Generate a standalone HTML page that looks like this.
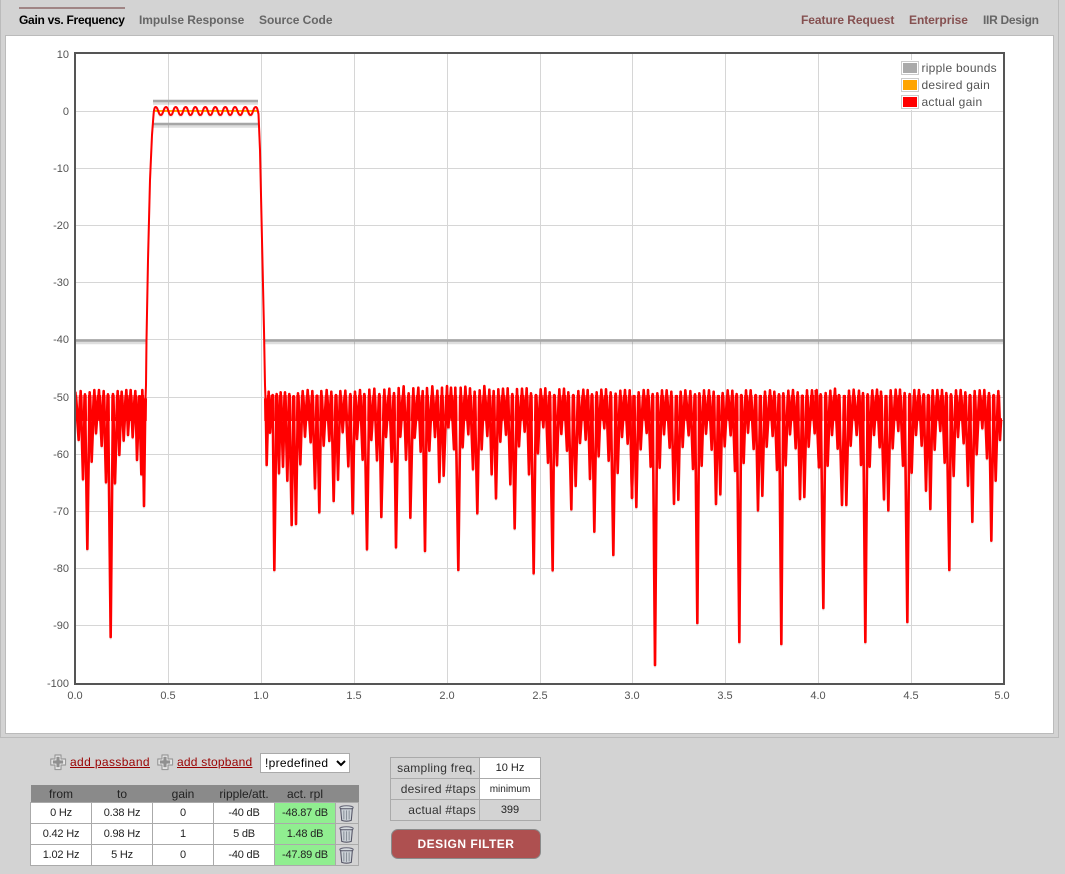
<!DOCTYPE html>
<html><head><meta charset="utf-8">
<style>
html,body{margin:0;padding:0;background:#d3d3d3;width:1065px;height:874px;overflow:hidden;font-family:"Liberation Sans",Arial,sans-serif;color:#333}
.abs{position:absolute}
#outer{left:0;top:0;width:1057px;height:737px;border:1px solid #bbb;border-top:0}
#panel{left:5px;top:35px;width:1047px;height:697px;background:#fff;border:1px solid #bbb}
.tab{position:absolute;top:13px;font-size:12px;font-weight:bold;line-height:14px;color:#666;white-space:nowrap;letter-spacing:-.05px}
#ul{left:19px;top:7px;width:106px;height:1.5px;background:#a08585}
svg text{font-family:"Liberation Sans",Arial,sans-serif}
a{color:#900;text-decoration:underline}
.lnk{position:absolute;top:755px;font-size:12px;line-height:15px;white-space:nowrap}
select{position:absolute;left:260px;top:753px;width:90px;height:20px;font:12px "Liberation Sans",Arial,sans-serif;letter-spacing:.3px;background:#fff;border:1px solid #aaa;padding:0;color:#000;border-radius:0}
table{border-collapse:collapse;table-layout:fixed;position:absolute}
#t1{left:30px;top:785px;width:328px}
#t1 th{background:#8a8a8a;font-weight:normal;font-size:12px;height:17px;padding:0;color:#222;text-align:center}
#t1 td{border:1px solid #aaa;background:#fff;font-size:11px;letter-spacing:-.2px;height:20px;padding:0;text-align:center;color:#222}
#t1 td.g{background:#90ee90}
#t1 td.x{background:#d3d3d3;line-height:0;text-align:left;padding-left:3px}
#t2{left:390px;top:757px;width:150px}
#t2 td{border:1px solid #aaa;height:20px;padding:0;font-size:12px;color:#333}
#t2 td.l{text-align:right;padding-right:3px;letter-spacing:.25px;background:#d3d3d3}
#t2 td.v{text-align:center;background:#fff;font-size:11px;color:#222}
#btn{left:391px;top:829px;width:148px;height:28px;background:#ae5050;border:1px solid #8a8a8a;border-radius:7px;color:#fff;font-weight:bold;font-size:12px;letter-spacing:.5px;line-height:28px;text-align:center}
</style></head><body>
<div class="abs" id="outer"></div>
<div class="abs" id="panel"></div>
<div class="abs" id="ul"></div>
<div class="tab" style="left:19px;color:#000;letter-spacing:-.28px">Gain vs. Frequency</div>
<div class="tab" style="left:139px">Impulse Response</div>
<div class="tab" style="left:259px">Source Code</div>
<div class="tab" style="left:801px;color:#855050">Feature Request</div>
<div class="tab" style="left:909px;color:#855050">Enterprise</div>
<div class="tab" style="left:983px;letter-spacing:-.3px">IIR Design</div>

<svg class="abs" style="left:0;top:0" width="1065" height="740" viewBox="0 0 1065 740">
<defs>
<clipPath id="band"><rect x="76" y="395" width="927" height="26"/></clipPath>
<path id="pass" fill="none" stroke-linejoin="round" d="M145.4 402 146 385 146.5 340 148 260 150 180 152 135 153.5 115 C154 109 154.6 107 155.7 107 C158 107 158.4 115 160.8 115 S163.6 107 166 107 S168.4 115 170.8 115 S173.3 107 175.7 107 S178.3 115 180.7 115 S183.2 107 185.7 107 S188 115 190.5 115 S192.9 107 195.3 107 S197.8 115 200.3 115 S202.8 107 205.3 107 S207.8 115 210.3 115 S212.8 107 215.3 107 S217.8 115 220.3 115 S222.8 107 225.3 107 S227.7 115 230.2 115 S232.6 107 235 107 S237.6 115 240.2 115 S242.8 107 245.3 107 S248 115 250.5 115 S253.1 107 255.7 107 C257 107 257.5 109 258.5 114 L260 150 262 240 264 330 265 385 265.6 402"/>
<g id="stop" fill="none" stroke-linejoin="round">
<path vector-effect="non-scaling-stroke" transform="translate(72 385) scale(.33333)" d="M10 20 20 165 26 18 33 283 39 28 46 492 53 22 59 230 67 15 72 145 81 15 89 183 95 18 102 292 108 28 116 756 123 27 129 295 137 18 142 210 149 20 155 167 163 15 168 150 176 15 182 157 190 18 195 225 202 35 208 268 211 15 216 363 220 40"/>
<path vector-effect="non-scaling-stroke" transform="translate(260 385) scale(.33333)" d="M17 40 20 240 26 20 30 143 38 30 43 555 50 27 57 265 62 22 69 245 75 22 82 287 88 27 95 420 101 35 108 417 114 25 121 238 128 18 135 155 143 15 152 172 157 18 165 310 171 32 178 382 184 18 191 182 200 15 208 168 214 20 221 348 228 30 234 284 241 18 248 142 256 17 265 244 271 27 278 385 285 20 291 162 300 15 308 224 313 27 321 493 328 14 334 165 343 11 351 226 358 27 364 396 373 14 378 156 388 11 395 230 402 24 408 487 416 9 421 155 431 4 438 224 446 25 451 398 460 10 464 158 475 8 482 200 488 18 495 498 501 9 508 197 517 4 525 156 532 17 538 291 546 8 551 272 561 3 565 130"/>
<path vector-effect="non-scaling-stroke" transform="translate(445 385) scale(.33333)" d="M10 130 18 8 27 193 31 8 40 555 47 8 53 187 61 5 70 148 75 10 84 253 89 20 97 385 104 16 110 193 118 3 127 153 133 14 140 268 146 18 153 340 160 13 166 170 174 11 183 149 188 10 196 298 202 27 209 430 216 12 222 184 231 11 239 140 245 10 252 268 258 25 266 565 273 30 279 205 287 13 295 127 301 10 309 233 314 22 323 556 328 30 336 241 343 13 349 147 357 11 366 197 370 22 379 373 385 30 392 303 400 18 405 174 415 14 422 164 428 15 435 282 441 28 448 440 455 22 461 214 469 14 478 130 483 13 491 227 497 22 505 510 512 26 518 264 526 17 531 156 540 15 548 176 554 16 561 338 567 33"/>
<path vector-effect="non-scaling-stroke" transform="translate(630 385) scale(.33333)" d="M0 33 6 338 12 33 19 366 26 22 32 193 41 15 50 144 54 15 62 245 68 27 75 840 82 25 89 248 96 16 102 148 110 16 119 188 124 20 132 356 139 33 145 344 152 20 158 186 166 16 176 151 181 18 189 252 195 28 202 714 208 25 215 242 222 16 228 146 237 16 245 194 251 20 258 357 265 33 271 328 278 24 284 184 293 16 302 151 307 17 315 258 320 27 328 771 334 30 341 234 348 16 354 143 362 16 371 192 377 30 384 376 391 33 397 332 405 20 410 185 420 16 428 153 433 20 441 255 447 28 454 777 460 25 467 241 475 17 480 148 489 15 497 190 503 22 510 342 517 32 523 336 531 16 536 185 546 16 554 145 560 15 567 248"/>
<path vector-effect="non-scaling-stroke" transform="translate(815 385) scale(.33333)" d="M2 15 12 247 17 28 25 669 32 24 38 242 46 17 51 150 60 11 68 191 72 30 81 360 88 33 94 360 102 17 107 182 116 14 125 150 132 17 138 240 144 24 151 771 158 28 164 245 172 16 177 150 186 14 194 187 198 20 207 343 213 33 220 376 227 16 233 190 242 14 250 138 255 14 264 242 269 24 277 711 284 27 290 263 298 15 303 150 312 15 320 182 326 28 333 317 340 30 346 372 353 16 359 194 367 15 376 138 381 15 389 233 394 24 403 555 408 28 416 273 423 16 429 156 437 15 446 175 451 22 459 302 465 30 472 410 479 18 485 208 494 16 502 130 508 15 516 220 522 24 529 467 536 30 542 287 550 18 555 165 558 105 561 105"/>
</g>
</defs>

<!-- grid -->
<g stroke="#d6d6d6" stroke-width="1" fill="none" shape-rendering="crispEdges">
<path d="M168.5 54V684M261.5 54V684M354.5 54V684M447.5 54V684M540.5 54V684M632.5 54V684M725.5 54V684M818.5 54V684M911.5 54V684"/>
<path d="M75 111.5H1004M75 168.5H1004M75 225.5H1004M75 282.5H1004M75 339.5H1004M75 397.5H1004M75 454.5H1004M75 511.5H1004M75 568.5H1004M75 625.5H1004"/>
</g>

<!-- ripple bounds -->
<g fill="none">
<path d="M153 103H258M153 126H258M76 342.5H146M265 342.5H1003" stroke="#000" stroke-opacity=".13" stroke-width="3.5"/>
<path d="M153 101H258M153 124H258M76 340.5H146M265 340.5H1003" stroke="#a6a6a6" stroke-width="2.4"/>
<path d="M155 111H258" stroke="#ffa500" stroke-width="2"/>
</g>

<!-- curve -->
<use href="#stop" transform="translate(0 1.4)" stroke="#000" stroke-opacity=".08" stroke-width="2.6"/>
<use href="#pass" transform="translate(0 1.4)" stroke="#000" stroke-opacity=".08" stroke-width="2"/>
<use href="#stop" stroke="#f00" stroke-width="2.6"/>
<use href="#pass" stroke="#f00" stroke-width="2"/>
<g clip-path="url(#band)"><use href="#stop" stroke="#f00" stroke-width="3.4"/></g>

<!-- frame -->
<rect x="75" y="53" width="929" height="631" fill="none" stroke="#555" stroke-width="2"/>

<!-- legend -->
<rect x="899" y="60" width="100" height="50" fill="#fff"/>
<g fill="#fff" stroke="#ccc">
<rect x="901.5" y="61.5" width="17" height="13"/>
<rect x="901.5" y="78.5" width="17" height="13"/>
<rect x="901.5" y="95.5" width="17" height="13"/>
</g>
<rect x="903" y="63" width="14" height="10" fill="#aaa"/>
<rect x="903" y="80" width="14" height="10" fill="#ffa500"/>
<rect x="903" y="97" width="14" height="10" fill="#f00"/>
<g font-size="12" fill="#545454" letter-spacing=".26">
<text x="921.5" y="72">ripple bounds</text>
<text x="921.5" y="89">desired gain</text>
<text x="921.5" y="106">actual gain</text>
</g>

<!-- axis labels -->
<g font-size="11" fill="#545454" text-anchor="end">
<text x="69" y="58">10</text>
<text x="69" y="115">0</text>
<text x="69" y="172">-10</text>
<text x="69" y="229">-20</text>
<text x="69" y="286">-30</text>
<text x="69" y="343">-40</text>
<text x="69" y="401">-50</text>
<text x="69" y="458">-60</text>
<text x="69" y="515">-70</text>
<text x="69" y="572">-80</text>
<text x="69" y="629">-90</text>
<text x="69" y="687">-100</text>
</g>
<g font-size="11" fill="#545454" text-anchor="middle">
<text x="75" y="699">0.0</text>
<text x="168" y="699">0.5</text>
<text x="261" y="699">1.0</text>
<text x="354" y="699">1.5</text>
<text x="447" y="699">2.0</text>
<text x="540" y="699">2.5</text>
<text x="632" y="699">3.0</text>
<text x="725" y="699">3.5</text>
<text x="818" y="699">4.0</text>
<text x="911" y="699">4.5</text>
<text x="1002" y="699">5.0</text>
</g>
</svg>

<!-- plus icons -->
<svg class="abs" style="left:50px;top:754px" width="17" height="17" viewBox="0 0 17 17"><path d="M5 1H11V5H15.5V11H11V15.5H5V11H.8V5H5Z" fill="#f0f0f0" stroke="#999" stroke-width="1.2" stroke-linejoin="round"/><path d="M6.4 2.8H9.6V6.4H13.2V9.6H9.6V13.2H6.4V9.6H2.8V6.4H6.4Z" fill="#909090"/></svg>
<svg class="abs" style="left:157px;top:754px" width="17" height="17" viewBox="0 0 17 17"><path d="M5 1H11V5H15.5V11H11V15.5H5V11H.8V5H5Z" fill="#f0f0f0" stroke="#999" stroke-width="1.2" stroke-linejoin="round"/><path d="M6.4 2.8H9.6V6.4H13.2V9.6H9.6V13.2H6.4V9.6H2.8V6.4H6.4Z" fill="#909090"/></svg>
<a class="lnk" style="left:70px;letter-spacing:.38px">add passband</a>
<a class="lnk" style="left:177px;letter-spacing:.22px">add stopband</a>
<select><option>!predefined</option></select>

<table id="t1">
<colgroup><col style="width:61px"><col style="width:61px"><col style="width:61px"><col style="width:61px"><col style="width:61px"><col style="width:23px"></colgroup>
<tr><th>from</th><th>to</th><th>gain</th><th>ripple/att.</th><th>act. rpl</th><th></th></tr>
<tr><td>0 Hz</td><td>0.38 Hz</td><td>0</td><td>-40 dB</td><td class="g">-48.87 dB</td><td class="x"><svg width="15" height="17" viewBox="0 0 14 16"><ellipse cx="7" cy="2.5" rx="6.3" ry="1.8" fill="#d5dade" stroke="#667"/><path d="M1.5 3.5 2.5 14.5Q7 16 11.5 14.5L12.5 3.5Z" fill="#cdd3d8" stroke="#556"/><path d="M4.5 5V13.5M7 5V14M9.5 5V13.5" stroke="#8a929a"/></svg></td></tr>
<tr><td>0.42 Hz</td><td>0.98 Hz</td><td>1</td><td>5 dB</td><td class="g">1.48 dB</td><td class="x"><svg width="15" height="17" viewBox="0 0 14 16"><ellipse cx="7" cy="2.5" rx="6.3" ry="1.8" fill="#d5dade" stroke="#667"/><path d="M1.5 3.5 2.5 14.5Q7 16 11.5 14.5L12.5 3.5Z" fill="#cdd3d8" stroke="#556"/><path d="M4.5 5V13.5M7 5V14M9.5 5V13.5" stroke="#8a929a"/></svg></td></tr>
<tr><td>1.02 Hz</td><td>5 Hz</td><td>0</td><td>-40 dB</td><td class="g">-47.89 dB</td><td class="x"><svg width="15" height="17" viewBox="0 0 14 16"><ellipse cx="7" cy="2.5" rx="6.3" ry="1.8" fill="#d5dade" stroke="#667"/><path d="M1.5 3.5 2.5 14.5Q7 16 11.5 14.5L12.5 3.5Z" fill="#cdd3d8" stroke="#556"/><path d="M4.5 5V13.5M7 5V14M9.5 5V13.5" stroke="#8a929a"/></svg></td></tr>
</table>

<table id="t2">
<colgroup><col style="width:89px"><col style="width:61px"></colgroup>
<tr><td class="l">sampling freq.</td><td class="v">10 Hz</td></tr>
<tr><td class="l">desired #taps</td><td class="v" style="font-size:10px">minimum</td></tr>
<tr><td class="l">actual #taps</td><td class="v" style="background:#d3d3d3">399</td></tr>
</table>
<div class="abs" id="btn">DESIGN FILTER</div>
</body></html>
